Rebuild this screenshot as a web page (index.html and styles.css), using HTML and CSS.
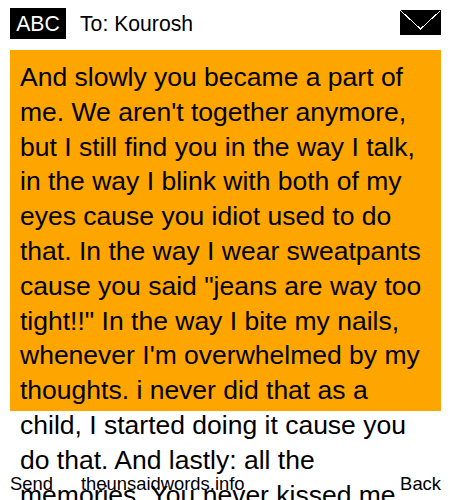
FILE: index.html
```
<!DOCTYPE html>
<html lang="en">
<head>
<meta charset="utf-8">
<title>Message</title>
<link rel="stylesheet" href="styles.css">
</head>
<body>
<div class="screen">
  <header class="top">
    <div class="mode">ABC</div>
    <div class="to">To: Kourosh</div>
    <svg class="env" width="41" height="25" viewBox="0 0 41 25" shape-rendering="crispEdges">
      <rect width="41" height="25" fill="#000"/>
      <path d="M0.5 0.5L20.5 19L40.5 0.5" fill="none" stroke="#fff" stroke-width="1"/>
    </svg>
  </header>
  <main class="msg">And slowly you became a part of me. We aren't together anymore, but I still find you in the way I talk, in the way I blink with both of my eyes cause you idiot used to do that. In the way I wear sweatpants cause you said "jeans are way too tight!!" In the way I bite my nails, whenever I'm overwhelmed by my thoughts. i never did that as a child, I started doing it cause you do that. And lastly: all the memories. You never kissed me</main>
  <footer class="bottom">
    <span class="send">Send</span>
    <span class="site">theunsaidwords.info</span>
    <span class="back">Back</span>
  </footer>
</div>
</body>
</html>
```
FILE: styles.css
```
html, body {
  margin: 0;
  padding: 0;
  background: #fff;
}
.screen {
  width: 450px;
  height: 500px;
  position: relative;
  overflow: hidden;
  font-family: "Liberation Sans", Arial, sans-serif;
  color: #000;
  padding: 8px 9px 0 10px;
  box-sizing: border-box;
}
.top {
  display: flex;
  align-items: flex-start;
  height: 42px;
}
.mode {
  width: 56px;
  height: 31px;
  line-height: 31px;
  background: #000;
  color: #fff;
  font-size: 21.2px;
  text-align: center;
}
.to {
  margin-left: 14px;
  font-size: 21.2px;
  line-height: 31px;
  flex: 1;
}
.env {
  display: block;
  margin-top: 2px;
}
.msg {
  height: 361px;
  box-sizing: border-box;
  background: #ffa500;
  padding: 10px;
  font-size: 26.5px;
  line-height: 34.8px;
}
.bottom {
  position: absolute;
  left: 10px;
  right: 9px;
  bottom: 5px;
  display: flex;
  font-size: 18.4px;
  line-height: 22px;
}
.site {
  margin-left: 28px;
  flex: 1;
}
```
